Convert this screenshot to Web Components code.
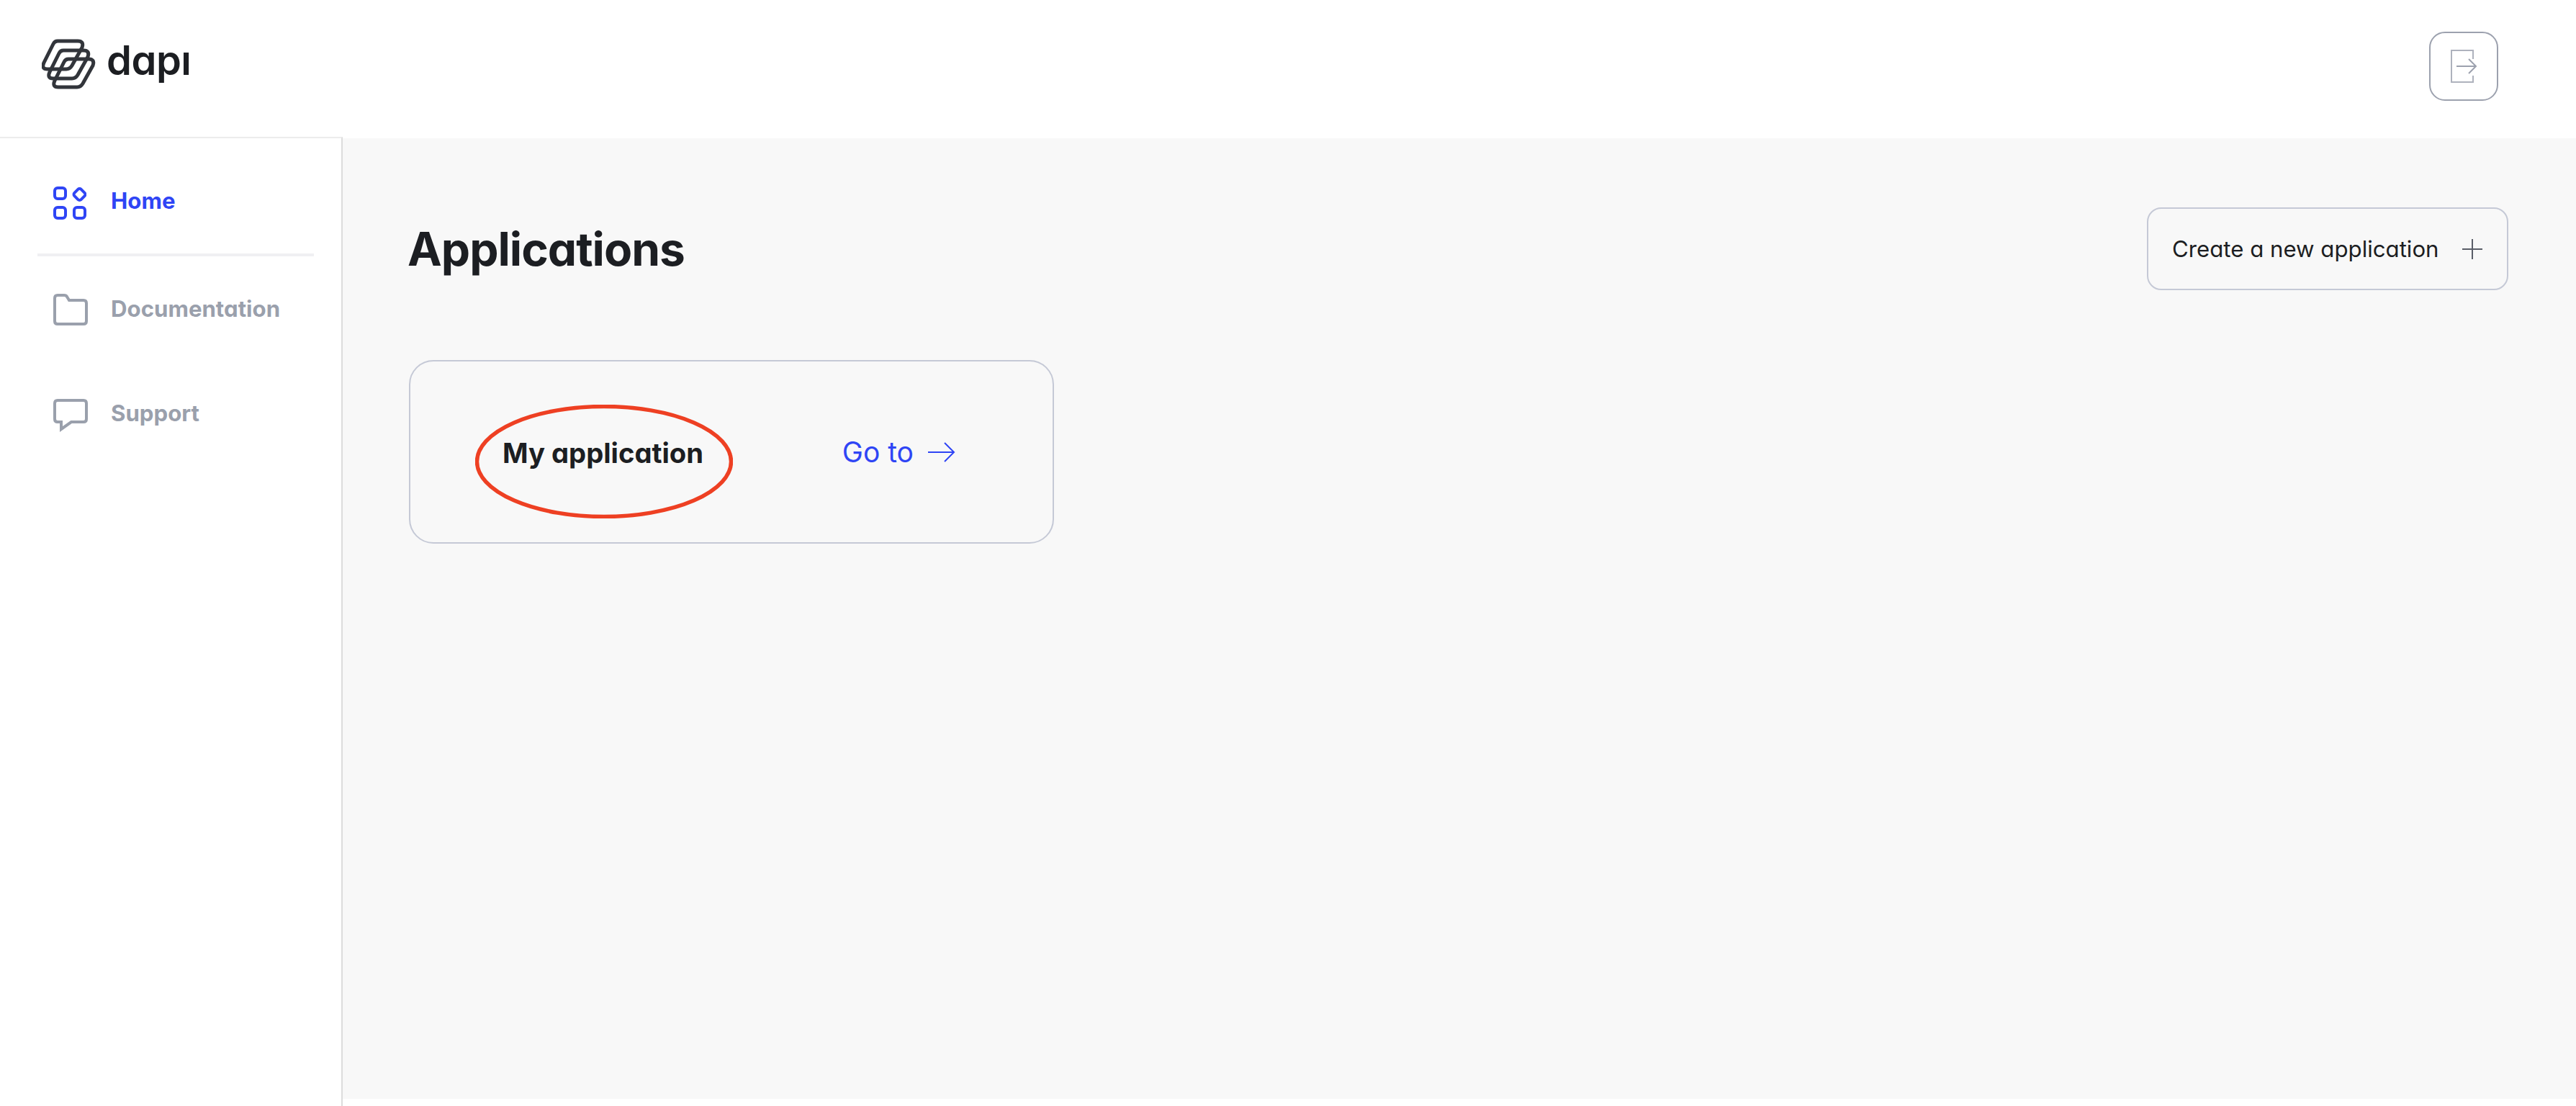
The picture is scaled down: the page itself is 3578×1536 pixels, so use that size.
<!DOCTYPE html>
<html lang="en">
<head>
<meta charset="utf-8">
<title>dapi</title>
<style>
  html, body { margin: 0; height: 100%; background: #fff; }
  body { font-family: Inter, "Noto Sans", sans-serif; font-feature-settings: "cv11" 1; color: #1c1e22; }
</style>
</head>
<body>
<dapi-app>
  <dapi-header slot="header"></dapi-header>
  <dapi-sidebar slot="sidebar">
    <dapi-nav-item active label="Home">
      <svg slot="icon" width="46" height="46" viewBox="0 0 46 46" fill="none" stroke="currentColor" stroke-width="4">
        <rect x="2" y="2" width="15" height="15" rx="4"/>
        <rect x="30" y="4.5" width="13" height="13" rx="3" transform="rotate(45 36.5 11)"/>
        <rect x="2" y="29" width="15" height="15" rx="4"/>
        <rect x="29" y="29" width="15" height="15" rx="4"/>
      </svg>
    </dapi-nav-item>
    <dapi-nav-item divided label="Documentation">
      <svg slot="icon" width="48" height="44" viewBox="0 0 48 44" fill="none" stroke="currentColor" stroke-width="4">
        <path d="M2 6Q2 2 6 2H15Q18 2 19 4L22 9H42Q46 9 46 13V38Q46 42 42 42H6Q2 42 2 38Z"/>
      </svg>
    </dapi-nav-item>
    <dapi-nav-item label="Support">
      <svg slot="icon" width="48" height="46" viewBox="0 0 48 46" fill="none" stroke="currentColor" stroke-width="4">
        <path d="M6 2H42Q46 2 46 6V28Q46 32 42 32H25L11 42V32H6Q2 32 2 28V6Q2 2 6 2Z"/>
      </svg>
    </dapi-nav-item>
  </dapi-sidebar>
  <dapi-main slot="main">
    <span slot="title">Applications</span>
    <dapi-create-button slot="action">Create a new application</dapi-create-button>
    <dapi-app-card>My application</dapi-app-card>
  </dapi-main>
</dapi-app>

<script>
class DapiApp extends HTMLElement {
    constructor() {
        super();
        this.attachShadow({ mode: 'open' }).innerHTML = `
            <style>
                :host { display: grid; grid-template-columns: 476px 1fr; grid-template-rows: 192px 1fr; height: 1536px; }
                ::slotted([slot=header]) { grid-column: 1 / 3; }
            </style>
            <slot name="header"></slot>
            <slot name="sidebar"></slot>
            <slot name="main"></slot>
        `;
    }
}

class DapiHeader extends HTMLElement {
    constructor() {
        super();
        this.attachShadow({ mode: 'open' }).innerHTML = `
            <style>
                :host { display: flex; justify-content: space-between; align-items: flex-start; height: 192px; padding: 44px 108px 0 58px; box-sizing: border-box; background: #fff; }
                .logo { display: flex; align-items: flex-start; margin-top: 10px; }
                .word { margin-left: 14px; margin-top: -5px; font-size: 56px; line-height: 70px; font-weight: 600; letter-spacing: -0.5px; color: #1c1e22; }
                .dotless { display: inline-block; clip-path: inset(24px 0 0 0); }
                button { width: 96px; height: 96px; padding: 0; display: flex; align-items: center; justify-content: center; background: #fff; border: 2px solid #9ca1ae; border-radius: 22px; }
                svg { display: block; }
            </style>
            <div class="logo">
                <svg width="76" height="70" viewBox="58 53 76 70" fill="none" stroke="#32353b" stroke-width="5">
                    <path id="sheet" d="M80 56H108Q117 56 114 65L100 90Q97 95 92 95H66Q57 95 61 86L74 60Q76 56 80 56Z"/>
                    <use href="#sheet" x="8" y="13"/>
                    <use href="#sheet" x="15" y="25"/>
                </svg>
                <span class="word">dap<span class="dotless">i</span></span>
            </div>
            <button aria-label="Log out">
                <svg width="40" height="50" viewBox="0 0 40 50" fill="none" stroke-width="2">
                    <path stroke="#aeb2bd" d="M33 15V3H3V47H33V38"/>
                    <path stroke="#9ca1ae" d="M10 25H37M27 15L37 25L27 35"/>
                </svg>
            </button>
        `;
    }
}

class DapiSidebar extends HTMLElement {
    constructor() {
        super();
        this.attachShadow({ mode: 'open' }).innerHTML = `
            <style>
                :host { display: flex; flex-direction: column; box-sizing: border-box; border-top: 2px solid #ececec; border-right: 2px solid #dcdcdc; margin-top: -2px; padding-top: 44px; background: #fff; }
            </style>
            <slot></slot>
        `;
    }
}

class DapiNavItem extends HTMLElement {
    constructor() {
        super();
        this.attachShadow({ mode: 'open' }).innerHTML = `
            <style>
                :host { display: block; color: #9aa0ac; }
                :host([active]) { color: #2f45f5; }
                :host([divided]) { margin-bottom: 55px; }
                .rule { display: none; height: 4px; width: 384px; margin: 24px 0 28px 52px; background: #f0f0f3; }
                :host([divided]) .rule { display: block; }
                .row { display: flex; align-items: center; height: 92px; padding-left: 74px; }
                .icon { width: 48px; height: 46px; display: flex; align-items: center; margin-right: 32px; }
                .label { font-size: 31.2px; font-weight: 700; padding-bottom: 6px; }
                :host([divided]) .label { padding-bottom: 2px; }
                ::slotted(svg) { display: block; }
            </style>
            <div class="rule"></div>
            <div class="row">
                <span class="icon"><slot name="icon"></slot></span>
                <span class="label">${this.getAttribute('label')}</span>
            </div>
        `;
    }
}

class DapiMain extends HTMLElement {
    constructor() {
        super();
        this.attachShadow({ mode: 'open' }).innerHTML = `
            <style>
                :host { display: block; box-sizing: border-box; margin-bottom: 10px; padding: 96px 94px 0 90px; background: #f8f8f8; }
                .top { display: flex; justify-content: space-between; align-items: center; margin-bottom: 97px; }
                .title { font-size: 64px; font-weight: 700; letter-spacing: -1px; color: #1c1e22; }
                ::slotted(dapi-app-card) { margin-left: 2px; }
            </style>
            <div class="top">
                <span class="title"><slot name="title"></slot></span>
                <slot name="action"></slot>
            </div>
            <slot></slot>
        `;
    }
}

class DapiCreateButton extends HTMLElement {
    constructor() {
        super();
        this.attachShadow({ mode: 'open' }).innerHTML = `
            <style>
                :host { display: flex; align-items: center; justify-content: space-between; box-sizing: border-box; width: 502px; height: 115px; padding: 0 34px 0 33px; border: 2px solid #c5c9d6; border-radius: 20px; font-size: 31.2px; font-weight: 400; color: #1c1e22; }
                svg { display: block; }
            </style>
            <slot></slot>
            <svg width="28" height="28" viewBox="0 0 28 28" fill="none" stroke="#5a5e68" stroke-width="2">
                <path d="M0 14H28M14 0V28"/>
            </svg>
        `;
    }
}

class DapiAppCard extends HTMLElement {
    constructor() {
        super();
        this.attachShadow({ mode: 'open' }).innerHTML = `
            <style>
                :host { display: flex; position: relative; align-items: center; justify-content: space-between; box-sizing: border-box; width: 896px; height: 255px; padding: 0 135px 0 128px; border: 2px solid #c5c9d6; border-radius: 34px; }
                .name { font-size: 38.2px; font-weight: 700; padding-top: 2px; color: #1c1e22; }
                .goto { display: flex; align-items: center; gap: 20px; font-size: 39px; color: #2f45f5; }
                .ring { position: absolute; left: 90px; top: 60px; }
                svg { display: block; }
            </style>
            <span class="name"><slot></slot></span>
            <span class="goto">Go to
                <svg width="38" height="28" viewBox="0 0 38 28" fill="none" stroke="#2f45f5" stroke-width="2">
                    <path d="M0 14H36M23 1L36 14L23 27"/>
                </svg>
            </span>
            <svg class="ring" width="358" height="158" viewBox="0 0 358 158" fill="none">
                <ellipse cx="179" cy="79" rx="176.5" ry="76.5" stroke="#ee4023" stroke-width="5.5"/>
            </svg>
        `;
    }
}

customElements.define('dapi-app', DapiApp);
customElements.define('dapi-header', DapiHeader);
customElements.define('dapi-sidebar', DapiSidebar);
customElements.define('dapi-nav-item', DapiNavItem);
customElements.define('dapi-main', DapiMain);
customElements.define('dapi-create-button', DapiCreateButton);
customElements.define('dapi-app-card', DapiAppCard);
</script>
</body>
</html>
